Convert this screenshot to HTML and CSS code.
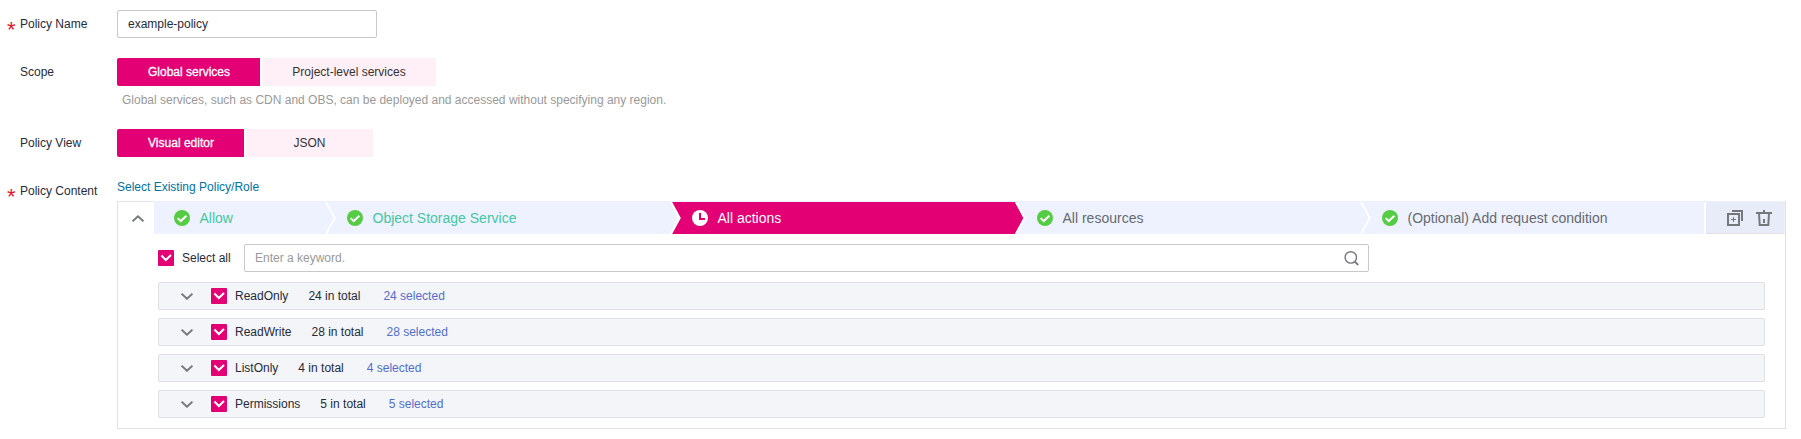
FILE: index.html
```html
<!DOCTYPE html>
<html lang="en">
<head>
<meta charset="utf-8">
<title>Create Policy</title>
<link rel="stylesheet" href="styles.css">
</head>
<body>
<svg class="defs" aria-hidden="true">
  <symbol id="done" viewBox="0 0 16 16"><circle cx="8" cy="8" r="8" fill="#5c4"/><path d="M3.7 8.1l3 3 5.7-5.4" fill="none" stroke="#fff" stroke-width="2"/></symbol>
  <symbol id="clock" viewBox="0 0 16 16"><circle cx="8" cy="8" r="8" fill="#fff"/><path d="M8 3v6h5" fill="none" stroke="#e20074" stroke-width="2"/></symbol>
  <symbol id="tick" viewBox="0 0 16 16"><path d="M3.4 5.6l4.4 4.4 5.2-5.1" fill="none" stroke="#fff" stroke-width="2.1"/></symbol>
  <symbol id="down" viewBox="0 0 12 7"><path d="M.6.7L6 5.6 11.4.7" fill="none" stroke="#75787b" stroke-width="1.9"/></symbol>
  <symbol id="arrow" viewBox="0 0 11 32"><path d="M1 0l8.7 16L1 32" fill="none" stroke="#fff" stroke-width="2"/></symbol>
</svg>
<form class="form">
  <div class="field name">
    <label class="label required">Policy Name</label>
    <input class="input name-input" type="text" value="example-policy">
  </div>
  <div class="field scope">
    <span class="label">Scope</span>
    <div>
      <div class="tabs"><span class="tab active">Global services</span><span class="tab wide">Project-level services</span></div>
      <p class="hint">Global services, such as CDN and OBS, can be deployed and accessed without specifying any region.</p>
    </div>
  </div>
  <div class="field view">
    <span class="label">Policy View</span>
    <div class="tabs view-tabs"><span class="tab active">Visual editor</span><span class="tab">JSON</span></div>
  </div>
  <div class="field content">
    <span class="label required">Policy Content</span>
    <div class="content-body">
      <a class="link">Select Existing Policy/Role</a>
      <section class="panel">
        <header class="head">
          <span class="toggle"><svg class="up" width="12" height="7"><use href="#down"/></svg></span>
          <div class="steps">
            <div class="step first ok"><svg class="status"><use href="#done"/></svg>Allow</div>
            <div class="step ok"><svg class="arrow"><use href="#arrow"/></svg><svg class="status"><use href="#done"/></svg>Object Storage Service</div>
            <div class="step current"><svg class="arrow"><path d="M0 0h1l8.7 16L1 32H0z" fill="#eef2ff"/><use href="#arrow"/></svg><svg class="status"><use href="#clock"/></svg>All actions</div>
            <div class="step"><svg class="arrow"><path d="M0 0l8.5 16L0 32z" fill="#e20074"/><use href="#arrow"/></svg><svg class="status"><use href="#done"/></svg>All resources</div>
            <div class="step last"><svg class="arrow"><use href="#arrow"/></svg><svg class="status"><use href="#done"/></svg>(Optional) Add request condition</div>
          </div>
          <div class="tools">
            <svg width="16" height="16" viewBox="0 0 16 16" fill="none" stroke="#75787b"><path d="M1 4h11v11H1zM5 1h10v10" stroke-width="2"/><path d="M6.5 7v5M4 9.5h5" stroke-width="1"/></svg>
            <svg width="16" height="16" viewBox="0 0 16 16" fill="none" stroke="#75787b" stroke-width="2"><path d="M0 3h16M8 0v3M3 3l.7 12h8.6L13 3M8 9v4"/></svg>
          </div>
        </header>
        <div class="body">
          <div class="filter">
            <span class="check"><svg width="16" height="16"><use href="#tick"/></svg></span>
            <span class="all">Select all</span>
            <div class="search"><input class="input" type="text" placeholder="Enter a keyword."><svg class="glass" width="15" height="15" viewBox="0 0 15 15" fill="none" stroke="#75787b" stroke-width="1.4"><circle cx="6.8" cy="6.4" r="5.7"/><path d="M10.8 10.6l3.4 3.4" stroke-width="1.8"/></svg></div>
          </div>
          <div class="row"><svg class="fold"><use href="#down"/></svg><span class="check"><svg width="16" height="16"><use href="#tick"/></svg></span><span class="kind">ReadOnly</span><span class="total">24 in total</span><span class="selected">24 selected</span></div>
          <div class="row"><svg class="fold"><use href="#down"/></svg><span class="check"><svg width="16" height="16"><use href="#tick"/></svg></span><span class="kind">ReadWrite</span><span class="total">28 in total</span><span class="selected">28 selected</span></div>
          <div class="row"><svg class="fold"><use href="#down"/></svg><span class="check"><svg width="16" height="16"><use href="#tick"/></svg></span><span class="kind">ListOnly</span><span class="total">4 in total</span><span class="selected">4 selected</span></div>
          <div class="row"><svg class="fold"><use href="#down"/></svg><span class="check"><svg width="16" height="16"><use href="#tick"/></svg></span><span class="kind">Permissions</span><span class="total">5 in total</span><span class="selected">5 selected</span></div>
        </div>
      </section>
    </div>
  </div>
</form>
</body>
</html>
```
FILE: styles.css
```css
* { box-sizing: border-box; }
body {
  margin: 0;
  background: #fff;
  color: #252b3a;
  font: 12px/16px "Liberation Sans", Arial, sans-serif;
}
.defs { display: none; }
svg { display: block; flex: none; }
.form { padding: 10px 15px 10px 20px; }
.field { display: flex; align-items: flex-start; }
.label { position: relative; width: 97px; flex: none; padding-top: 6px; }
.required::before {
  content: "*";
  position: absolute;
  left: -13px;
  top: 12px;
  color: #e0182d;
  font-size: 22px;
  line-height: 16px;
}
.scope { margin-top: 20px; }
.view { margin-top: 21px; }
.content { margin-top: 22px; }
.content .label { padding-top: 4px; }
.content .required::before { top: 10px; }
.input {
  display: block;
  width: 100%;
  height: 28px;
  padding: 0 10px;
  border: 1px solid #c6c8ca;
  border-radius: 2px;
  outline: 0;
  background: #fff;
  color: #252b3a;
  font: inherit;
}
.input::placeholder { color: #999; opacity: 1; }
.name-input { width: 260px; }
.tabs { display: flex; gap: 2px; height: 28px; }
.tab {
  width: 143px;
  background: #fff0f8;
  color: #333;
  line-height: 28px;
  text-align: center;
}
.wide { width: 174px; }
.view-tabs .tab { width: 127px; }
.tab.active {
  padding-left: 1px;
  border-radius: 2px 0 0 2px;
  background: #e20074;
  color: #fff;
  -webkit-text-stroke: .3px #fff;
}
.hint { height: 16px; margin: 6px 0 0 5px; color: #999; }
.content-body { flex: 1; }
.link { display: block; height: 22px; color: #0072a3; }
.panel { height: 228px; border: 1px solid #dfe1e4; }
.head { display: flex; height: 33px; margin-top: -1px; }
.toggle {
  display: flex;
  align-items: center;
  justify-content: center;
  width: 36px;
  padding-left: 3px;
  padding-top: 1px;
  border-top: 1px solid #dfe1e4;
}
.up { transform: rotate(180deg); }
.steps {
  display: flex;
  flex: none;
  width: 1550px;
  border-top: 1px solid #edf0fa;
  background: #eef2ff;
}
.step {
  position: relative;
  display: flex;
  flex: none;
  align-items: center;
  gap: 9.5px;
  width: 345px;
  padding-left: 22px;
  color: #666a70;
  font-size: 14px;
}
.first { width: 171px; padding-left: 20px; }
.last { width: 344px; }
.ok { color: #46c6a2; }
.current { background: #e20074; color: #fff; }
.status { width: 16px; height: 16px; }
.arrow { position: absolute; left: 0; top: 0; width: 11px; height: 32px; }
.tools {
  display: flex;
  gap: 13px;
  align-items: center;
  justify-content: center;
  flex: 1;
  margin-left: 2px;
  padding-left: 8px;
  border: solid #f0f1f6;
  border-width: 1px 1px 0 0;
  border-bottom: 1px solid #dfe1e4;
  background: #e8ecf8;
}
.body { padding: 10px 20px 0 40px; }
.filter { display: flex; align-items: center; }
.check { display: block; flex: none; width: 16px; height: 16px; border-radius: 1px; background: #e20074; }
.all { width: 62px; margin-left: 8px; }
.search { position: relative; width: 1125px; }
.glass { position: absolute; right: 10px; top: 7px; }
.row {
  display: flex;
  align-items: center;
  height: 28px;
  margin-top: 8px;
  padding-left: 22px;
  border: 1px solid #dedfe1;
  border-radius: 2px;
  background: #f4f5f8;
}
.filter + .row { margin-top: 10px; }
.fold { width: 12px; height: 7px; margin-right: 18px; }
.kind { margin: 0 20px 0 8px; }
.selected { margin-left: 23px; color: #526ecc; }
```
